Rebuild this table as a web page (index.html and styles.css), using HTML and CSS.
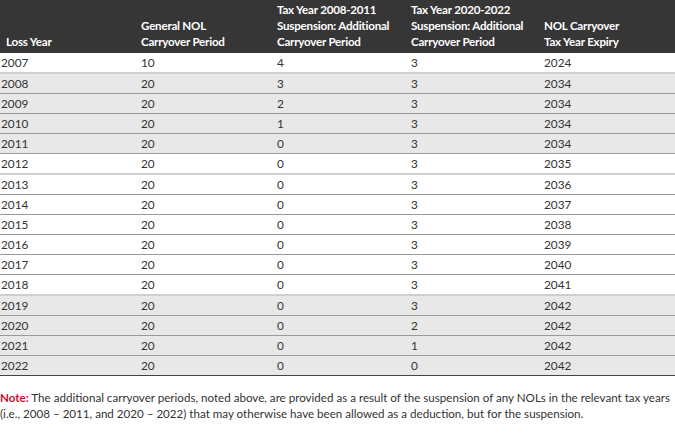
FILE: index.html
```html
<!DOCTYPE html>
<html>
<head>
<meta charset="utf-8">
<link rel="stylesheet" href="styles.css">
</head>
<body>
<div class="table">
  <div class="row head">
    <div class="cell first">Loss Year</div>
    <div class="cell">General NOL<br>Carryover Period</div>
    <div class="cell">Tax Year 2008-2011<br>Suspension: Additional<br>Carryover Period</div>
    <div class="cell">Tax Year 2020-2022<br>Suspension: Additional<br>Carryover Period</div>
    <div class="cell">NOL Carryover<br>Tax Year Expiry</div>
  </div>
  <div class="row sep"><div class="cell">2007</div><div class="cell">10</div><div class="cell">4</div><div class="cell">3</div><div class="cell">2024</div></div>
  <div class="row gray"><div class="cell">2008</div><div class="cell">20</div><div class="cell">3</div><div class="cell">3</div><div class="cell">2034</div></div>
  <div class="row gray"><div class="cell">2009</div><div class="cell">20</div><div class="cell">2</div><div class="cell">3</div><div class="cell">2034</div></div>
  <div class="row gray"><div class="cell">2010</div><div class="cell">20</div><div class="cell">1</div><div class="cell">3</div><div class="cell">2034</div></div>
  <div class="row gray"><div class="cell">2011</div><div class="cell">20</div><div class="cell">0</div><div class="cell">3</div><div class="cell">2034</div></div>
  <div class="row sep"><div class="cell">2012</div><div class="cell">20</div><div class="cell">0</div><div class="cell">3</div><div class="cell">2035</div></div>
  <div class="row"><div class="cell">2013</div><div class="cell">20</div><div class="cell">0</div><div class="cell">3</div><div class="cell">2036</div></div>
  <div class="row"><div class="cell">2014</div><div class="cell">20</div><div class="cell">0</div><div class="cell">3</div><div class="cell">2037</div></div>
  <div class="row"><div class="cell">2015</div><div class="cell">20</div><div class="cell">0</div><div class="cell">3</div><div class="cell">2038</div></div>
  <div class="row"><div class="cell">2016</div><div class="cell">20</div><div class="cell">0</div><div class="cell">3</div><div class="cell">2039</div></div>
  <div class="row"><div class="cell">2017</div><div class="cell">20</div><div class="cell">0</div><div class="cell">3</div><div class="cell">2040</div></div>
  <div class="row sep"><div class="cell">2018</div><div class="cell">20</div><div class="cell">0</div><div class="cell">3</div><div class="cell">2041</div></div>
  <div class="row gray"><div class="cell">2019</div><div class="cell">20</div><div class="cell">0</div><div class="cell">3</div><div class="cell">2042</div></div>
  <div class="row gray"><div class="cell">2020</div><div class="cell">20</div><div class="cell">0</div><div class="cell">2</div><div class="cell">2042</div></div>
  <div class="row gray"><div class="cell">2021</div><div class="cell">20</div><div class="cell">0</div><div class="cell">1</div><div class="cell">2042</div></div>
  <div class="row gray last"><div class="cell">2022</div><div class="cell">20</div><div class="cell">0</div><div class="cell">0</div><div class="cell">2042</div></div>
</div>
<p class="note"><span class="note-label">Note:</span> The additional carryover periods, noted above, are provided as a result of the suspension of any NOLs in the relevant tax years<br>(i.e., 2008 – 2011, and 2020 – 2022) that may otherwise have been allowed as a deduction, but for the suspension.</p>
</body>
</html>
```
FILE: styles.css
```css
html, body {
  margin: 0;
  padding: 0;
  background: #fff;
}
body {
  font-family: "Lato", "Noto Sans", sans-serif;
  font-size: 11.8px;
  color: #333;
  width: 675px;
}
.table {
  display: flex;
  flex-direction: column;
}
.row {
  display: grid;
  grid-template-columns: 140px 136px 134px 133px 1fr;
  height: 19px;
  align-items: center;
  border-bottom: 1px solid #9a9a9a;
  box-sizing: content-box;
}
.row.gray {
  background: #e8e8e8;
}
.row.sep {
  border-bottom: 2px solid #cfcfcf;
}
.row.last {
  border-bottom: 1px solid #444;
}
.cell {
  padding-left: 1px;
  white-space: nowrap;
}
.head {
  background: #363636;
  color: #fff;
  font-weight: 700;
  font-size: 11.6px;
  letter-spacing: -0.22px;
  height: 53px;
  align-items: end;
  border-bottom: none;
  line-height: 16px;
}
.head .cell {
  padding-bottom: 3px;
}
.head .cell.first {
  padding-left: 6px;
}
.note {
  margin: 14px 0 0 0;
  line-height: 16px;
  font-size: 11.6px;
  color: #333;
}
.note-label {
  color: #c8102e;
  font-weight: 700;
}
```
